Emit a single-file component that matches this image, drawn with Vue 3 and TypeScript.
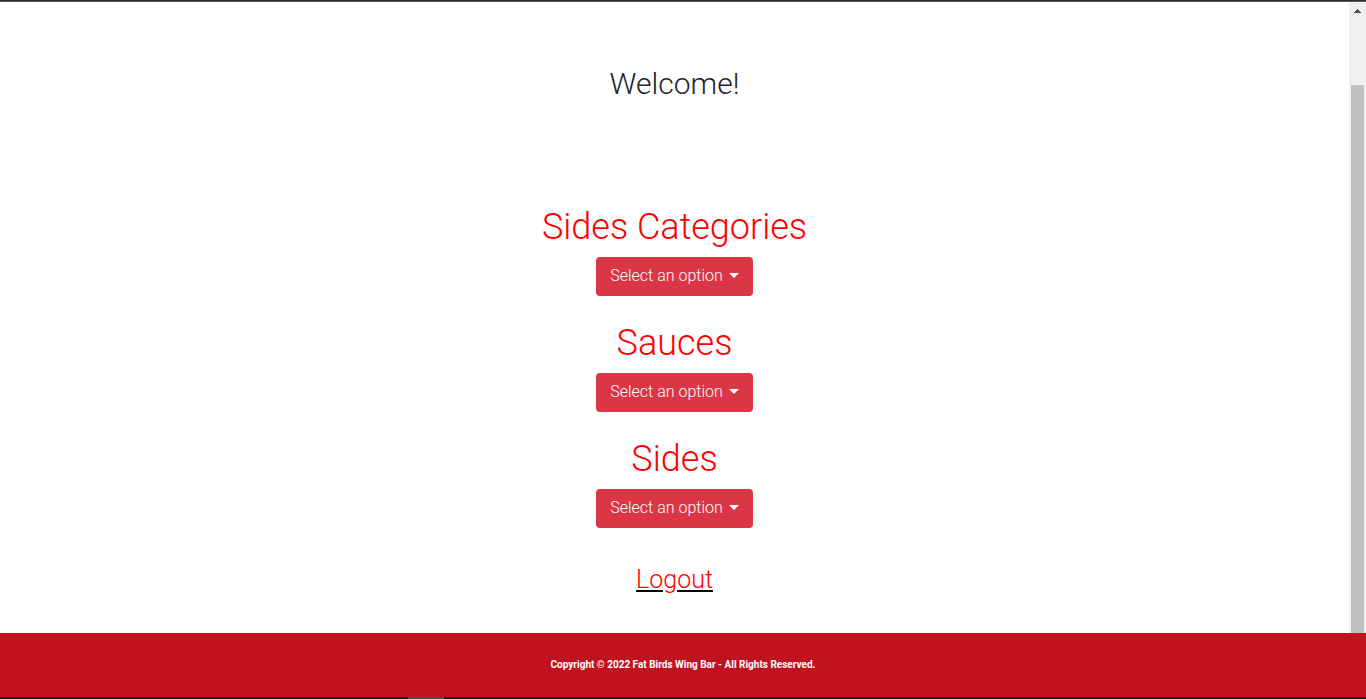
<script setup lang="ts">
const sections: { id: string; title: string }[] = [
  { id: 'categories', title: 'Sides Categories' },
  { id: 'sauces', title: 'Sauces' },
  { id: 'sides', title: 'Sides' },
]
</script>

<template>
  <div class="page">
    <div class="top-edge"></div>
    <div class="view">
      <main class="content">
        <h2 class="welcome">Welcome!</h2>
        <section v-for="section in sections" :key="section.id" class="group">
          <h1 :id="section.id" class="title">{{ section.title }}</h1>
          <button type="button" class="dropdown" aria-haspopup="true" :aria-describedby="section.id">
            <span>Select an option</span>
            <span class="caret"></span>
          </button>
        </section>
        <a href="#" class="logout">Logout</a>
      </main>
      <div class="scrollbar" aria-hidden="true">
        <svg class="arrow" width="7" height="4" viewBox="0 0 7 4" shape-rendering="crispEdges">
          <path d="M3 0h1v1h1v1h1v1h1v1H0V3h1V2h1V1h1z" fill="#505050" />
        </svg>
        <div class="thumb"></div>
      </div>
    </div>
    <footer class="footer">Copyright © 2022 Fat Birds Wing Bar - All Rights Reserved.</footer>
    <div class="bottom-edge"><div class="bottom-mark"></div></div>
  </div>
</template>

<style>
body {
  margin: 0;
  background: #fff;
}
</style>

<style scoped>
.page {
  display: flex;
  flex-direction: column;
  min-height: 100vh;
  font-family: Roboto, "Liberation Sans", sans-serif;
  font-weight: 300;
  color: #212529;
}
.top-edge {
  height: 2px;
  box-sizing: border-box;
  background: #2b2a2b;
  border-bottom: 1px solid #5c5859;
}
.view {
  display: flex;
  flex: 1;
}
.content {
  flex: 1;
  display: flex;
  flex-direction: column;
  align-items: center;
  padding: 63px 0 36px;
}
.welcome {
  margin: 0 0 100px;
  font-size: 30px;
  line-height: 38px;
  font-weight: 300;
}
.group {
  display: flex;
  flex-direction: column;
  align-items: center;
  margin-bottom: 23px;
}
.title {
  margin: 0 0 6px;
  font-size: 36px;
  line-height: 48px;
  font-weight: 300;
  color: #f00;
}
.dropdown {
  display: flex;
  align-items: center;
  gap: 6px;
  height: 39px;
  padding: 0 14px 2px;
  border: 0;
  border-radius: 4px;
  background: #dc3545;
  color: #fff;
  font: inherit;
  font-size: 16px;
  line-height: 24px;
}
.caret {
  border-top: 5px solid #fff;
  border-left: 5px solid transparent;
  border-right: 5px solid transparent;
}
.logout {
  margin-top: 12px;
  font-size: 25px;
  line-height: 34px;
  color: #f00;
  text-decoration: underline;
  text-decoration-color: #000;
}
.scrollbar {
  display: flex;
  flex-direction: column;
  align-items: center;
  width: 17px;
  background: #f0f0f0;
}
.arrow {
  margin: 7px 0 72px;
}
.thumb {
  flex: 1;
  width: 13px;
  background: #c1c1c1;
}
.footer {
  padding: 24px 0;
  background: #c1121f;
  color: #fff;
  font-size: 10px;
  line-height: 16px;
  font-weight: 700;
  text-align: center;
}
.bottom-edge {
  height: 2px;
  background: #2b1b1c;
}
.bottom-mark {
  width: 36px;
  height: 2px;
  margin-left: 408px;
  background: #5c4647;
}
</style>
